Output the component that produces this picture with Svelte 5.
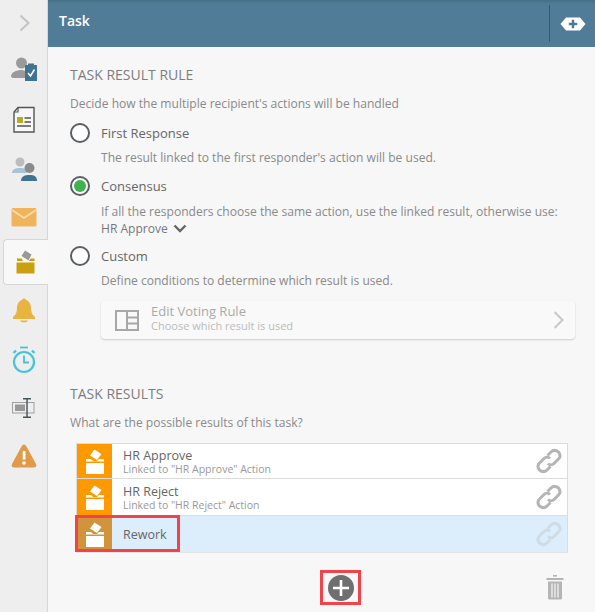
<script>
  const rows = [
    { name: 'HR Approve', sub: 'Linked to "HR Approve" Action' },
    { name: 'HR Reject', sub: 'Linked to "HR Reject" Action' },
    { name: 'Rework', sub: '', selected: true }
  ];
</script>

{#snippet ballot()}
  <svg class="ballot" viewBox="0 0 20 25" width="20" height="25">
    <path d="M9.5 0.5 L16.5 5 L12 11 L5 6.5 Z" fill="#fff" />
    <path d="M1 10 H6 L8 12 H12 L14 10 H19 V12.5 H1 Z" fill="#fff" />
    <rect x="1" y="14" width="18" height="11" fill="#fff" />
  </svg>
{/snippet}

{#snippet link(cls)}
  <svg class={cls} viewBox="0 0 26 26" width="26" height="26" fill="none" stroke="currentColor" stroke-width="3">
    <path d="M11.5 7.5 L15 4 C17 2 20 2 22.5 4 C24.5 6.5 24.5 9 22.5 11 L18 15.5 C16 17.5 13.5 17 12 15.5" />
    <path d="M14.5 18.5 L11 22 C9 24 6 24 3.5 22 C1.5 19.5 1.5 17 3.5 15 L8 10.5 C10 8.5 12.5 9 14 10.5" />
  </svg>
{/snippet}

<div class="page">
  <nav class="rail">
    <div class="rail-top">
      <svg viewBox="0 0 12 18" width="12" height="18" fill="none" stroke="#c4c4c4" stroke-width="2"><path d="M1.5 1.5 L9.5 9 L1.5 16.5" /></svg>
    </div>
    <div class="ico i1">
      <svg viewBox="0 0 28 28" width="28" height="28">
        <circle cx="10.5" cy="7" r="5.5" fill="#9a9a9a" />
        <path d="M0 21 C0 16 5 14 11 14 L15 15 V22 H2 Z" fill="#9a9a9a" />
        <rect x="14" y="9" width="12" height="16" fill="#3f7391" />
        <rect x="17" y="7.5" width="6" height="3" fill="#3f7391" />
        <path d="M17 17 L19.5 20 L23.5 13.5" fill="none" stroke="#fff" stroke-width="1.6" />
      </svg>
    </div>
    <div class="ico i2">
      <svg viewBox="0 0 24 28" width="24" height="28">
        <path d="M6 1.5 H22 V26 H2 V6 Z" fill="#f7f7f7" stroke="#555" stroke-width="1.4" />
        <path d="M6 1.5 V6 H2" fill="none" stroke="#555" stroke-width="1.2" />
        <rect x="5" y="11" width="6" height="6" fill="#b5ad1e" />
        <path d="M12.5 12 H19 M12.5 16 H19 M5 20 H19" stroke="#555" stroke-width="1.6" />
      </svg>
    </div>
    <div class="ico i3">
      <svg viewBox="0 0 28 26" width="28" height="26">
        <circle cx="9" cy="6" r="4.5" fill="#bcbcbc" />
        <path d="M1 17 C1 13 5 12 9 12 C13 12 16 13 16 17 Z" fill="#a7c3d6" />
        <circle cx="18.5" cy="12" r="5" fill="#8a8a8a" />
        <path d="M10 25 C10 20 14 19 18.5 19 C23 19 26 20 26 25 Z" fill="#3f7391" />
      </svg>
    </div>
    <div class="ico i4">
      <svg viewBox="0 0 26 20" width="26" height="20">
        <rect x="0.5" y="1" width="25" height="18.5" rx="1.5" fill="#f0b45c" />
        <path d="M1 3 L13 11 L25 3" fill="none" stroke="#f8dcb0" stroke-width="1.6" />
      </svg>
    </div>
    <div class="tab">
      <svg viewBox="0 0 20 24" width="20" height="24">
        <path d="M9 0.5 L15.5 4.5 L12.5 10.5 L5.5 6 Z" fill="#999" />
        <path d="M1 8.5 H5.5 L7 11 H13 L14.5 8.5 H18.5 V11 H1 Z" fill="#caa011" />
        <rect x="0.5" y="12.5" width="18" height="11" fill="#caa011" />
      </svg>
    </div>
    <div class="ico i5">
      <svg viewBox="0 0 22 26" width="22" height="26">
        <path d="M0 19 C3 17 4 14 4 10 C4 5 7 2.5 9 2 C9 0 13 0 13 2 C15 2.5 18 5 18 10 C18 14 19 17 22 19 V21 H0 Z" fill="#e8b33f" />
        <path d="M7 22.5 H15 C14 25 8 25 7 22.5 Z" fill="#e8b33f" />
      </svg>
    </div>
    <div class="ico i6">
      <svg viewBox="0 0 24 28" width="24" height="28" fill="none" stroke="#45c4d8">
        <circle cx="12" cy="16" r="10" stroke-width="2.2" />
        <path d="M12 9.5 V16.5 H17" stroke-width="1.8" />
        <path d="M8 1.5 H16" stroke-width="1.8" />
        <path d="M1.5 7 L4 4.5 M22.5 7 L20 4.5" stroke-width="2.4" />
      </svg>
    </div>
    <div class="ico i7">
      <svg viewBox="0 0 23 20" width="23" height="20">
        <rect x="0.5" y="4.5" width="21.5" height="10.5" fill="none" stroke="#a0a0a0" />
        <rect x="3" y="6.5" width="10" height="6.5" fill="#999" />
        <path d="M11 0.7 H19 M15 0.7 V19.3 M11 19.3 H19" stroke="#46545a" stroke-width="1.4" fill="none" />
      </svg>
    </div>
    <div class="ico i8">
      <svg viewBox="0 0 26 24" width="26" height="24">
        <path d="M13 0.5 C14 0.5 15 1.5 15.5 2.5 L25 20 C26 22 25 23.5 23 23.5 H3 C1 23.5 0 22 1 20 L10.5 2.5 C11 1.5 12 0.5 13 0.5 Z" fill="#e09a4a" />
        <rect x="11.7" y="7" width="2.8" height="8.5" fill="#fff" />
        <circle cx="13" cy="19" r="1.8" fill="#fff" />
      </svg>
    </div>
  </nav>

  <main class="panel">
    <header class="head">
      <span class="title">Task</span>
      <div class="head-act">
        <svg viewBox="0 0 26 14" width="26" height="14">
          <path d="M6 0.5 H20 L25.5 7 L20 13.5 H6 L0.5 7 Z" fill="#fff" />
          <path d="M13 2.8 V11.2 M8.8 7 H17.2" stroke="#4f7a95" stroke-width="2.4" />
        </svg>
      </div>
    </header>

    <section class="content">
      <h2>TASK RESULT RULE</h2>
      <p class="desc">Decide how the multiple recipient's actions will be handled</p>

      <div class="opt">
        <span class="radio"></span>
        <span class="opt-name">First Response</span>
      </div>
      <p class="opt-desc">The result linked to the first responder's action will be used.</p>

      <div class="opt o2">
        <span class="radio on"></span>
        <span class="opt-name">Consensus</span>
      </div>
      <p class="opt-desc two">If all the responders choose the same action, use the linked result, otherwise use:<br />
        <span class="pick">HR Approve
          <svg viewBox="0 0 14 9" width="14" height="9" fill="none" stroke="#666" stroke-width="2.4"><path d="M1.5 1.5 L7 7 L12.5 1.5" /></svg>
        </span>
      </p>

      <div class="opt o3">
        <span class="radio"></span>
        <span class="opt-name">Custom</span>
      </div>
      <p class="opt-desc">Define conditions to determine which result is used.</p>

      <div class="vote">
        <svg viewBox="0 0 24 21" width="24" height="21" fill="none" stroke="#a8a8a8" stroke-width="2"><rect x="1" y="1" width="22" height="19" /><path d="M12 1 V20 M12 7.5 H23 M12 13.5 H23" /></svg>
        <div class="vote-text">
          <div class="vote-name">Edit Voting Rule</div>
          <div class="vote-sub">Choose which result is used</div>
        </div>
        <svg class="vote-chev" viewBox="0 0 11 18" width="11" height="18" fill="none" stroke="#c8c8c8" stroke-width="2"><path d="M1.5 1 L9.5 9 L1.5 17" /></svg>
      </div>

      <h2 class="h2b">TASK RESULTS</h2>
      <p class="desc d2">What are the possible results of this task?</p>

      <div class="list">
        {#each rows as r}
          <div class="row" class:sel={r.selected}>
            <div class="badge">{@render ballot()}</div>
            <div class="row-text">
              <div class="row-name">{r.name}</div>
              {#if r.sub}<div class="row-sub">{r.sub}</div>{/if}
            </div>
            {@render link('lnk')}
          </div>
        {/each}
        <div class="hl"></div>
      </div>

      <div class="actions">
        <div class="add">
          <svg viewBox="0 0 26 26" width="26" height="26">
            <circle cx="13" cy="13" r="13" fill="#6f6f6f" />
            <path d="M13 5 V21 M5 13 H21" stroke="#fff" stroke-width="2.6" />
          </svg>
        </div>
        <svg class="trash" viewBox="0 0 18 25" width="18" height="25" fill="#b5b5b5">
          <rect x="7" y="0" width="4" height="1.6" />
          <rect x="0.5" y="3" width="17" height="2" />
          <path d="M2 6.5 H16 V23.5 L15 24.5 H3 L2 23.5 Z" />
          <path d="M6 8.5 V22.5 M9 8.5 V22.5 M12 8.5 V22.5" stroke="#f7f7f7" stroke-width="1.2" />
        </svg>
      </div>
    </section>
  </main>
</div>

<style>
  :global(body) {
    margin: 0;
    font-family: "Open Sans", sans-serif;
  }
  .page {
    width: 595px;
    height: 612px;
    display: flex;
    overflow: hidden;
    background: #f7f7f7;
  }
  .rail {
    width: 48px;
    flex: none;
    box-sizing: border-box;
    background: #eeeeee;
    border-right: 1px solid #d6d6d6;
    display: flex;
    flex-direction: column;
    align-items: center;
    position: relative;
  }
  .rail-top {
    height: 45px;
    width: 100%;
    display: flex;
    align-items: center;
    justify-content: center;
    padding-left: 3px;
    box-sizing: border-box;
  }
  .ico {
    display: flex;
    justify-content: center;
    align-items: center;
    width: 100%;
    height: 27px;
    flex: none;
  }
  .i1 { margin-top: 11px; margin-left: 2px; }
  .i2 { margin-top: 23px; }
  .i3 { margin-top: 22px; margin-left: 2px; }
  .i4 { margin-top: 21px; }
  .tab {
    margin-top: 9px;
    width: 45px;
    height: 46px;
    align-self: flex-start;
    margin-left: 3px;
    box-sizing: border-box;
    background: #f8f8f8;
    border: 1px solid #d6d6d6;
    border-right: none;
    border-radius: 4px 0 0 4px;
    display: flex;
    align-items: center;
    justify-content: center;
    position: relative;
    z-index: 1;
  }
  .i5 { margin-top: 12px; }
  .i6 { margin-top: 22px; }
  .i7 { margin-top: 21px; }
  .i8 { margin-top: 21px; }

  .panel {
    flex: 1;
    min-width: 0;
    display: flex;
    flex-direction: column;
  }
  .head {
    height: 47px;
    flex: none;
    box-sizing: border-box;
    background: linear-gradient(#466f88 0, #507c97 4px, #507c97 100%);
    display: flex;
    align-items: center;
    justify-content: space-between;
    padding: 0 9px 0 11px;
  }
  .title {
    color: #fff;
    font-size: 14px;
    font-weight: 600;
    position: relative;
    top: -3px;
  }
  .head-act {
    height: 37px;
    border-left: 1px solid #315a74;
    padding-left: 10px;
    display: flex;
    align-items: center;
  }
  .content {
    padding: 0 27px 0 22px;
    color: #8a8a8a;
  }
  h2 {
    margin: 18px 0 0;
    font-size: 14px;
    line-height: 20px;
    font-weight: 400;
    color: #7d7d7d;
  }
  .h2b { margin-top: 0; padding-top: 45px; }
  .desc {
    margin: 10px 0 0;
    font-size: 12.07px;
    line-height: 17px;
    color: #8a8a8a;
  }
  .d2 { margin-top: 10px; }
  .opt {
    display: flex;
    align-items: center;
    margin-top: 11px;
    height: 20px;
  }
  .o2 { margin-top: 10px; }
  .o3 { margin-top: 9px; }
  .radio {
    width: 20px;
    height: 20px;
    box-sizing: border-box;
    border: 2px solid #5a5f63;
    border-radius: 50%;
    background: #fff;
    flex: none;
    display: flex;
    align-items: center;
    justify-content: center;
  }
  .radio.on::after {
    content: "";
    width: 12px;
    height: 12px;
    border-radius: 50%;
    background: #3fb24f;
  }
  .opt-name {
    margin-left: 11px;
    font-size: 13px;
    color: #666;
  }
  .opt-desc {
    margin: 6px 0 0 31px;
    font-size: 12.07px;
    line-height: 17px;
    color: #8a8a8a;
    white-space: nowrap;
  }
  .opt-desc.two { margin-top: 7px; }
  .pick { color: #777; }
  .pick svg { margin-left: 2px; }
  .vote {
    margin: 12px 0 0 31px;
    width: 474px;
    height: 38px;
    box-sizing: border-box;
    background: #f9f9f9;
    border-radius: 4px;
    box-shadow: 0 1px 2px rgba(0, 0, 0, 0.18);
    display: flex;
    align-items: center;
    padding: 0 11px 0 14px;
  }
  .vote-text { margin-left: 12px; flex: 1; padding-bottom: 4px; }
  .vote-name { font-size: 13px; line-height: 16px; color: #aaa; }
  .vote-sub { font-size: 11px; line-height: 14px; color: #bbb; }
  .list {
    margin: 12px 0 0 6px;
    width: 492px;
    box-sizing: border-box;
    border: 1px solid #dcdcdc;
    border-bottom: none;
    position: relative;
  }
  .row {
    height: 36px;
    background: #fff;
    border-bottom: 1px solid #dcdcdc;
    display: flex;
    align-items: center;
    position: relative;
  }
  .row:first-child { height: 34px; }
  .row.sel { background: #dcedfb; border-bottom-color: #e4e4e4; }
  .badge {
    width: 35px;
    height: 100%;
    background: #ff9900;
    display: flex;
    align-items: center;
    justify-content: center;
    flex: none;
  }
  .sel .badge { background: #cf943c; }
  .row-text { margin-left: 11px; flex: 1; padding-top: 2px; }
  .row-name { font-size: 12.5px; line-height: 14px; color: #666; }
  .row-sub { font-size: 10.5px; line-height: 12px; color: #999; }
  .lnk { color: #b5b5b5; margin-right: 5px; }
  .sel .lnk { color: #d0dbe4; }
  .hl {
    position: absolute;
    left: -2px;
    top: 71px;
    width: 105px;
    height: 37px;
    box-sizing: border-box;
    border: 3px solid #f2434a;
    pointer-events: none;
  }
  .actions {
    position: relative;
    display: flex;
    justify-content: center;
    margin-top: 17px;
  }
  .add {
    width: 41px;
    height: 35px;
    box-sizing: border-box;
    border: 3px solid #f2434a;
    display: flex;
    align-items: center;
    justify-content: center;
    margin-left: 43px;
  }
  .trash {
    position: absolute;
    right: 4px;
    top: 5px;
  }
</style>
